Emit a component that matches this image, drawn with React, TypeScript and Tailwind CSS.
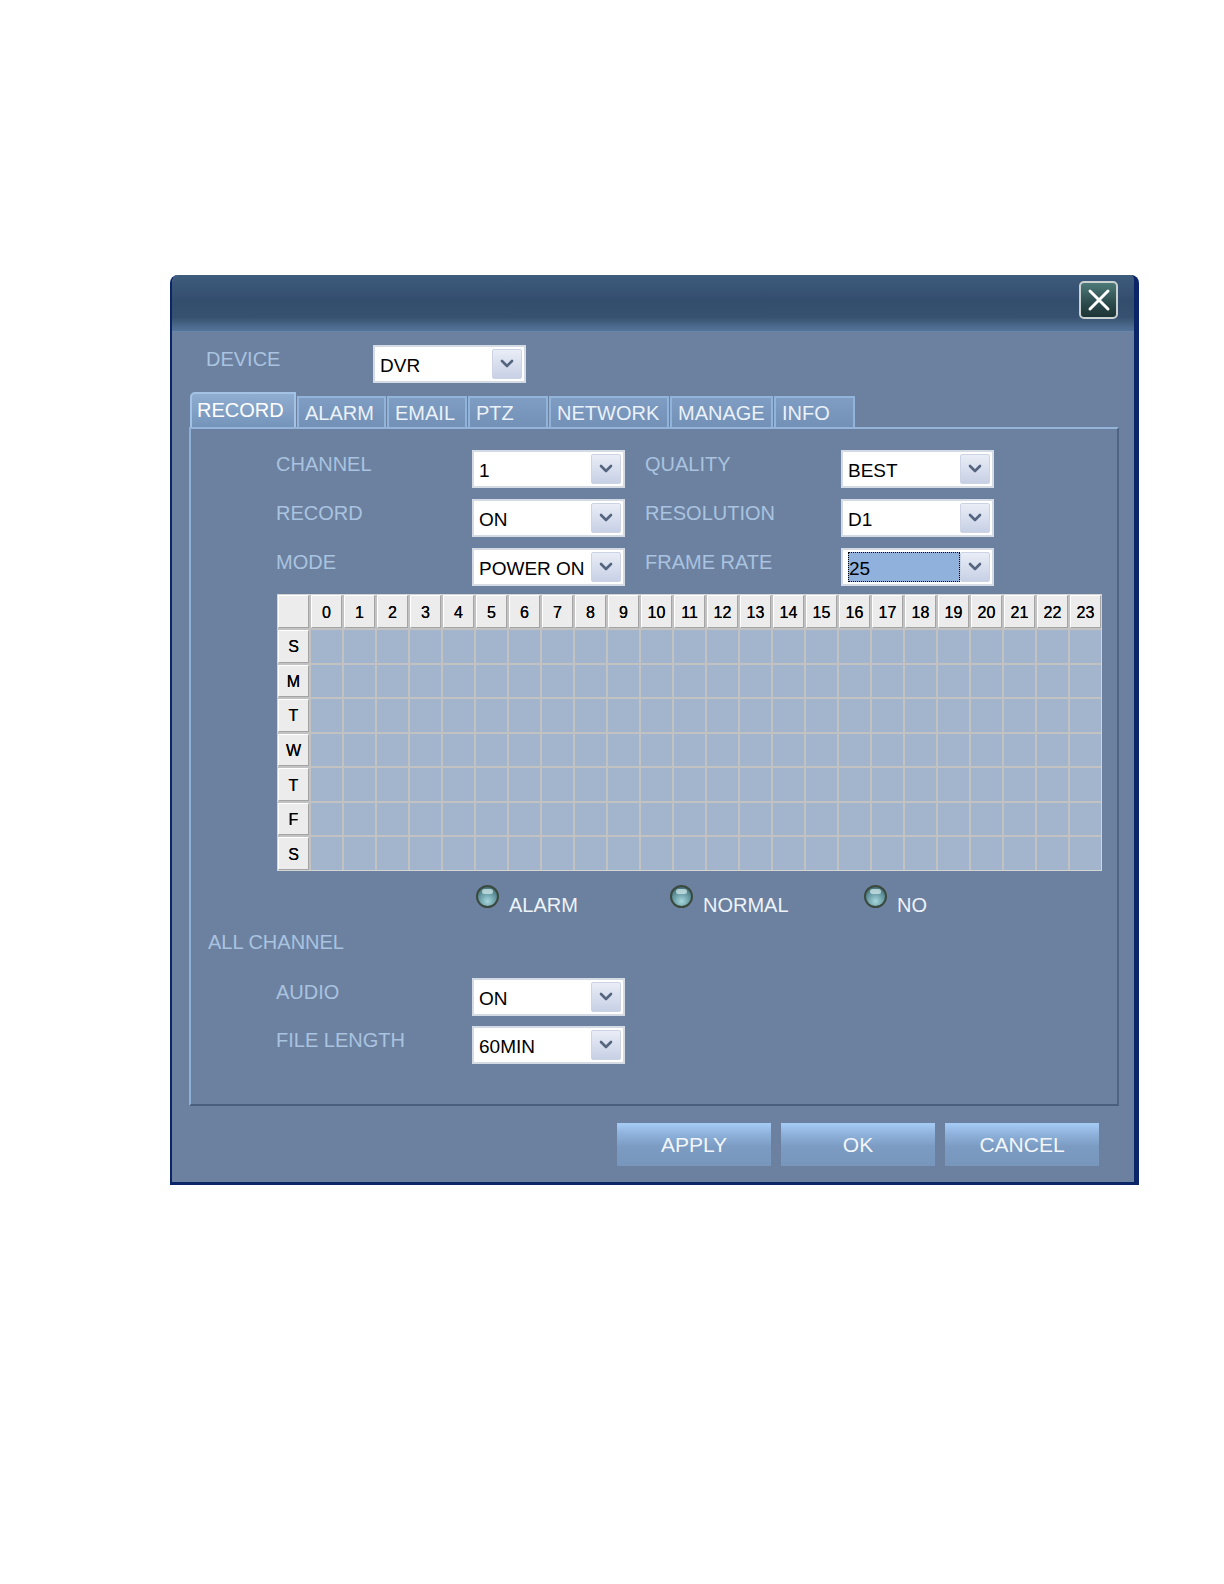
import React from "react";

const FONT = { fontFamily: '"Liberation Sans", Arial, sans-serif' };

function Chevron() {
  return (
    <svg width="14" height="10" viewBox="0 0 14 10">
      <path d="M2 2 L7 7 L12 2" fill="none" stroke="#55647f" strokeWidth="2.6" strokeLinecap="round" strokeLinejoin="round" />
    </svg>
  );
}

function Select({ value, highlight = false }: { value: string; highlight?: boolean }) {
  return (
    <div className="w-[153px] h-[38px] bg-white border-2 border-[#d5dbe4] flex items-center p-[2px] shrink-0">
      <div className="flex-1 h-full flex items-center pl-[3px]">
        {highlight ? (
          <div className="w-[112px] h-[30px] bg-[#8fb1dc] border border-dotted border-black flex items-center text-[19px] text-black leading-none pt-[2px]">
            {value}
          </div>
        ) : (
          <span className="text-[19px] text-black leading-none pt-[3px]">{value}</span>
        )}
      </div>
      <div className="w-[30px] h-full rounded-[2px] bg-gradient-to-b from-[#e9edf6] to-[#c7d0e5] border border-[#cbd3e4] flex items-center justify-center">
        <Chevron />
      </div>
    </div>
  );
}

function Label({ children, w }: { children: React.ReactNode; w: string }) {
  return <div className={`${w} text-[20px] leading-[28px] text-[#a9c3e0] shrink-0 whitespace-nowrap`}>{children}</div>;
}

function Radio({ label }: { label: string }) {
  return (
    <div className="w-[194px] flex items-start shrink-0">
      <div className="w-[23px] h-[23px] rounded-full border-2 border-[#3b4a3e] bg-[radial-gradient(circle_at_50%_75%,#a6d6dc_0%,#5f929c_55%,#34585e_100%)] relative">
        <div className="absolute left-[4px] top-[2px] w-[11px] h-[5px] rounded-full bg-[#d9eef0] opacity-70" />
      </div>
      <span className="ml-[10px] mt-[8px] text-[20px] leading-[24px] text-[#eef3fa]">{label}</span>
    </div>
  );
}

const tabs: { name: string; w: string; active?: boolean }[] = [
  { name: "RECORD", w: "w-[106px]", active: true },
  { name: "ALARM", w: "w-[89px]" },
  { name: "EMAIL", w: "w-[80px]" },
  { name: "PTZ", w: "w-[80px]" },
  { name: "NETWORK", w: "w-[120px]" },
  { name: "MANAGE", w: "w-[103px]" },
  { name: "INFO", w: "w-[81px]" },
];

const days = ["S", "M", "T", "W", "T", "F", "S"];
const hours = Array.from({ length: 24 }, (_, i) => i);

function HeaderCell({ children }: { children?: React.ReactNode }) {
  return (
    <div className="bg-[#ececec] border-t border-l border-white border-r border-b border-r-[#a4a4a4] border-b-[#a4a4a4] flex items-center justify-center text-[16px] text-black leading-none pt-[2px] [text-shadow:0_0_0.4px_#000]">
      {children}
    </div>
  );
}

function Button({ children }: { children: React.ReactNode }) {
  return (
    <div className="w-[154px] h-[43px] bg-[linear-gradient(to_bottom,#a6ccf6_0%,#8fb2dc_25%,#7b9bc2_55%,#7896bc_100%)] flex items-center justify-center text-[21px] text-[#f2f6fb]">
      {children}
    </div>
  );
}

export default function App() {
  return (
    <div className="min-h-[1584px] bg-white pt-[275px] pl-[170px]" style={FONT}>
      <div className="w-[969px] h-[910px] flex flex-col bg-[#6c819f] border-l-2 border-r-[5px] border-b-[3px] border-[#0b2569] rounded-tl-[8px] rounded-tr-[8px] overflow-hidden">
        {/* title bar */}
        <div className="h-[57px] shrink-0 bg-[linear-gradient(to_bottom,#3e5c7c_0%,#334d6d_45%,#36516f_75%,#56759a_100%)] border-b border-[#6585aa] flex justify-end items-start pt-[6px] pr-[16px]">
          <div className="w-[39px] h-[38px] rounded-[5px] border-2 border-[#c9d1d1] bg-[linear-gradient(to_bottom,#4d7a78_0%,#2c4a4c_60%,#1d3436_100%)] flex items-center justify-center">
            <svg width="26" height="26" viewBox="0 0 26 26">
              <path d="M4 4 L22 22 M22 4 L4 22" stroke="#ffffff" strokeWidth="3" strokeLinecap="round" />
            </svg>
          </div>
        </div>

        {/* body */}
        <div className="flex-1 flex flex-col pl-[17px] pr-[15px]">
          <div className="flex items-start mt-[13px] h-[38px]">
            <div className="ml-[17px] w-[167px] text-[20px] leading-[28px] text-[#a9c3e0]">DEVICE</div>
            <Select value="DVR" />
          </div>

          {/* tabs */}
          <div className="flex items-end gap-[1px] mt-[9px] h-[35px] pl-[1px]">
            {tabs.map((t) =>
              t.active ? (
                <div
                  key={t.name}
                  className={`${t.w} h-[35px] rounded-tl-[5px] border-2 border-b-0 border-[#a3c2e4] bg-[linear-gradient(to_bottom,#8fadd0_0%,#7594ba_100%)] text-[20px] text-white leading-none pl-[5px] pt-[6px]`}
                >
                  {t.name}
                </div>
              ) : (
                <div
                  key={t.name}
                  className={`${t.w} h-[31px] border-2 border-b-0 border-[#93b4da] bg-[linear-gradient(to_bottom,#7f9dc2_0%,#7391b7_100%)] text-[20px] text-[#eaf1f9] leading-none pl-[6px] pt-[5px] overflow-hidden whitespace-nowrap`}
                >
                  {t.name}
                </div>
              )
            )}
          </div>

          {/* panel */}
          <div className="h-[679px] border-2 border-t-[#94b4da] border-l-[#8eafd6] border-r-[#4f6483] border-b-[#4a5f7e] flex flex-col pt-[21px]">
            <div className="flex flex-col gap-[11px] pl-[85px]">
              {[
                ["CHANNEL", "1", "QUALITY", "BEST"],
                ["RECORD", "ON", "RESOLUTION", "D1"],
                ["MODE", "POWER ON", "FRAME RATE", "25"],
              ].map((r, i) => (
                <div key={i} className="flex items-start h-[38px]">
                  <Label w="w-[196px]">{r[0]}</Label>
                  <Select value={r[1]} />
                  <div className="w-[20px]" />
                  <Label w="w-[196px]">{r[2]}</Label>
                  <Select value={r[3]} highlight={i === 2} />
                </div>
              ))}
            </div>

            {/* schedule grid */}
            <div className="ml-[86px] mt-[8px] w-[825px] h-[277px] bg-[#c2c2c2] border border-[#d4d4d4] grid grid-cols-[31px_repeat(24,1fr)] grid-rows-[33px_repeat(7,1fr)] gap-[2px]">
              <HeaderCell />
              {hours.map((h) => (
                <HeaderCell key={h}>{h}</HeaderCell>
              ))}
              {days.map((d, di) => (
                <React.Fragment key={di}>
                  <HeaderCell>{d}</HeaderCell>
                  {hours.map((h) => (
                    <div key={h} className="bg-[#a2b5cc]" />
                  ))}
                </React.Fragment>
              ))}
            </div>

            {/* legend */}
            <div className="flex ml-[285px] mt-[14px] h-[32px]">
              <Radio label="ALARM" />
              <Radio label="NORMAL" />
              <Radio label="NO" />
            </div>

            <div className="ml-[17px] mt-[13px] text-[20px] leading-[24px] text-[#a9c3e0]">ALL CHANNEL</div>

            <div className="flex flex-col gap-[10px] pl-[85px] mt-[24px]">
              <div className="flex items-start h-[38px]">
                <Label w="w-[196px]">AUDIO</Label>
                <Select value="ON" />
              </div>
              <div className="flex items-start h-[38px]">
                <Label w="w-[196px]">FILE LENGTH</Label>
                <Select value="60MIN" />
              </div>
            </div>
          </div>

          {/* buttons */}
          <div className="flex justify-end gap-[10px] mt-[17px] pr-[20px]">
            <Button>APPLY</Button>
            <Button>OK</Button>
            <Button>CANCEL</Button>
          </div>
        </div>
      </div>
    </div>
  );
}
